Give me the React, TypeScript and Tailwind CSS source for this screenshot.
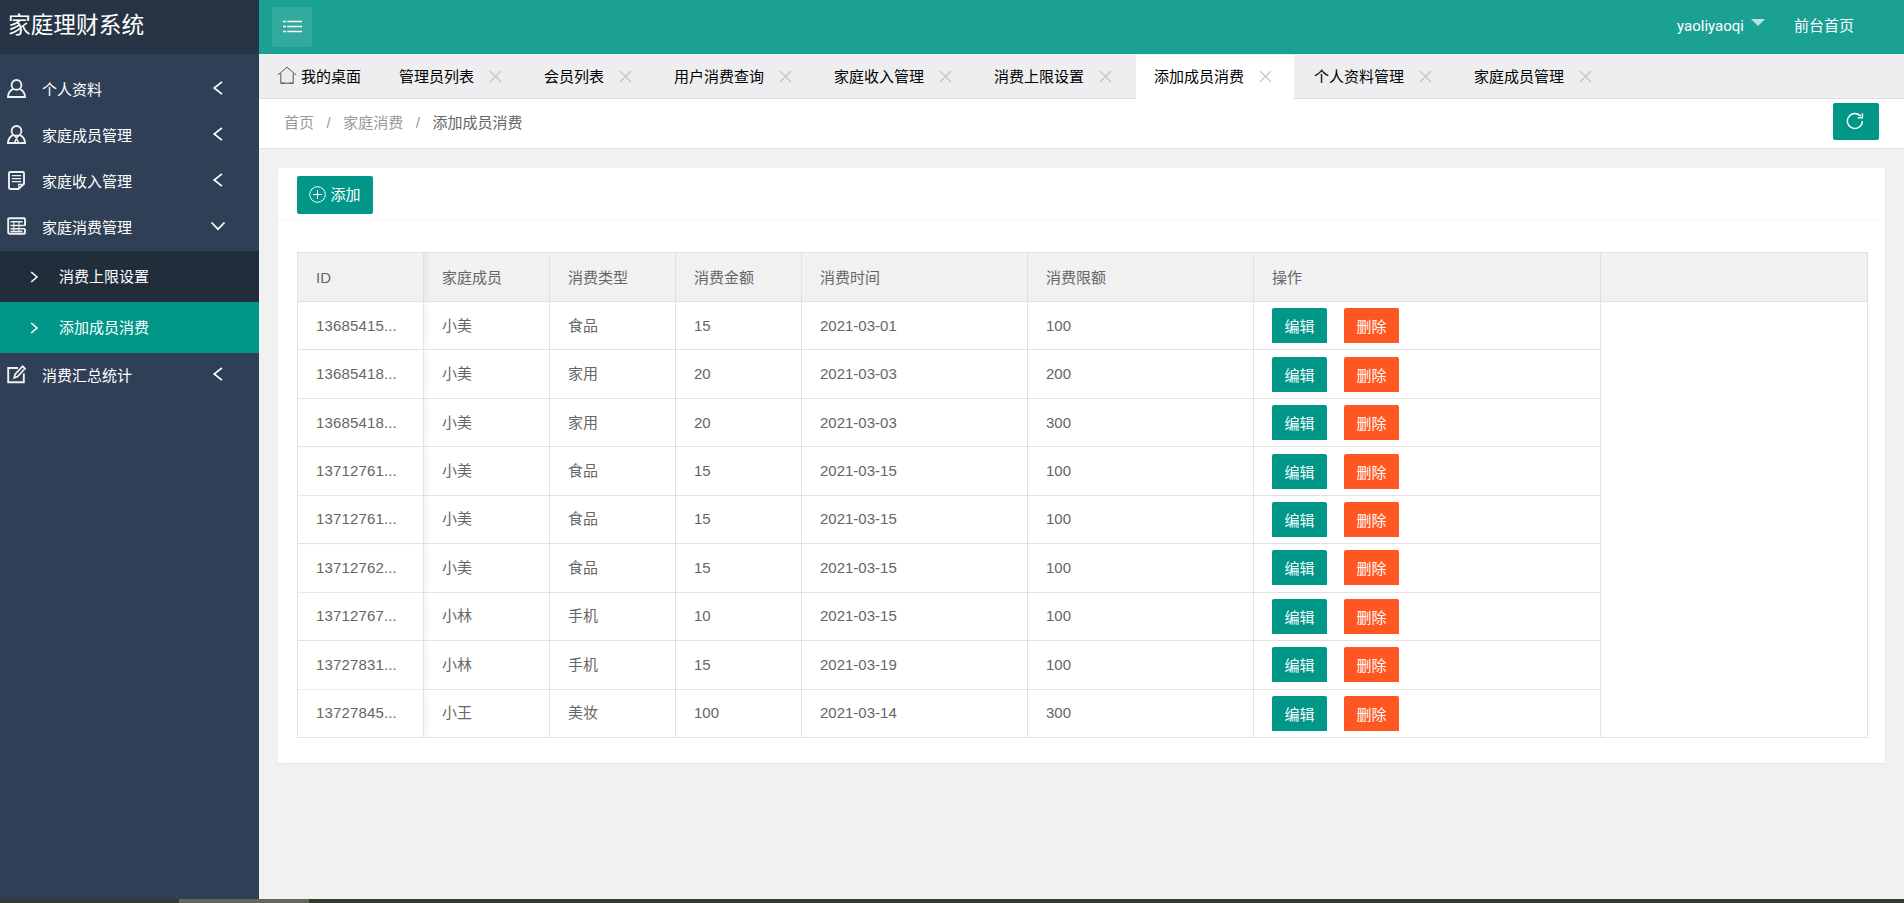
import type { ReactNode } from "react";

const menu = [
  { label: "个人资料", icon: "user" },
  { label: "家庭成员管理", icon: "member" },
  { label: "家庭收入管理", icon: "note" },
  { label: "家庭消费管理", icon: "grid", open: true, children: ["消费上限设置", "添加成员消费"] },
  { label: "消费汇总统计", icon: "edit" },
];

const tabs = [
  "管理员列表",
  "会员列表",
  "用户消费查询",
  "家庭收入管理",
  "消费上限设置",
  "添加成员消费",
  "个人资料管理",
  "家庭成员管理",
];

const current = "添加成员消费";

const rows = [
  ["13685415...", "小美", "食品", "15", "2021-03-01", "100"],
  ["13685418...", "小美", "家用", "20", "2021-03-03", "200"],
  ["13685418...", "小美", "家用", "20", "2021-03-03", "300"],
  ["13712761...", "小美", "食品", "15", "2021-03-15", "100"],
  ["13712761...", "小美", "食品", "15", "2021-03-15", "100"],
  ["13712762...", "小美", "食品", "15", "2021-03-15", "100"],
  ["13712767...", "小林", "手机", "10", "2021-03-15", "100"],
  ["13727831...", "小林", "手机", "15", "2021-03-19", "100"],
  ["13727845...", "小王", "美妆", "100", "2021-03-14", "300"],
];

const headers = ["ID", "家庭成员", "消费类型", "消费金额", "消费时间", "消费限额", "操作", ""];

const cols = "grid grid-cols-[126px_126px_126px_126px_226px_226px_347px_1fr]";

// fixed first column casts a shadow to the right only
const fixedCol = "tracking-[0.15px] shadow-[1px_0_8px_rgba(0,0,0,0.08)] [clip-path:inset(0_-10px_0_0)]";

const iconShapes: Record<string, ReactNode> = {
  user: (
    <>
      <circle cx="9.5" cy="5.9" r="4.9" />
      <path d="M6.3 9.8C3.4 11 1.2 14 1 18h17c-.2-4-2.4-7-5.3-8.2" />
    </>
  ),
  member: (
    <>
      <circle cx="9.5" cy="5.9" r="4.9" />
      <path d="M6.3 9.8C3.4 11 1.2 14 1 18h17c-.2-4-2.4-7-5.3-8.2" />
      <path d="M6.6 10l2.9 3 2.9-3M9.5 12.5L7.8 17.5M9.5 12.5l1.7 5" strokeWidth="1.5" />
    </>
  ),
  note: (
    <>
      <path d="M11.5 18H3.2c-.8 0-1.2-.4-1.2-1.2V2.2C2 1.4 2.4 1 3.2 1h12.6c.8 0 1.2.4 1.2 1.2v10.6L11.5 18z" />
      <path d="M11.8 17.5v-4.2h4.8M4.8 4.6h9.4M4.8 7.6h9.4M4.8 10.6h9.4" strokeWidth="1.3" />
    </>
  ),
  grid: (
    <>
      <path d="M18 8.5V2.2c0-.6-.4-1-1-1H2.2c-.6 0-1 .4-1 1v13.4c0 .7.6 1.2 1.2 1.2H17c.6 0 1-.4 1-1v-4" />
      <path d="M3.5 4.7h12M3.5 8.5H18M3.5 11.8H18M3.5 14.6h12" strokeWidth="1.5" />
      <path d="M6.8 4.5v10M12 4.5v10" strokeWidth="1" />
    </>
  ),
  edit: (
    <>
      <path d="M11 3H1.2v14.2h15.6V8.5" />
      <path d="M7.2 12.8l1-3.6L15.6 1.3 18 3.5l-7.4 8-3.4 1.3z" strokeWidth="1.7" />
    </>
  ),
};

function MenuIcon({ name }: { name: string }) {
  return (
    <svg
      className="mb-px h-[19px] w-[19px] shrink-0 text-[#eef1f4]"
      viewBox="0 0 19 19"
      fill="none"
      stroke="currentColor"
      strokeWidth="1.9"
    >
      {iconShapes[name]}
    </svg>
  );
}

function Chevron({ open }: { open?: boolean }) {
  return (
    <svg className="mb-[3px] h-4 w-4" viewBox="0 0 16 16" fill="none" stroke="currentColor" strokeWidth="1.7">
      <path d={open ? "M1.5 4.5L8 11.2l6.5-6.7" : "M12 1.8L4.2 8l7.8 6.2"} />
    </svg>
  );
}

function Sidebar() {
  return (
    <aside className="flex w-[259px] shrink-0 flex-col bg-[#2f4056] text-white">
      <h1 className="h-[54px] bg-[#263445] pl-[8px] text-[22.7px] leading-[51px]">家庭理财系统</h1>
      <nav className="pt-3">
        {menu.map((item) => (
          <div key={item.label}>
            <div className="flex h-[46px] items-center pr-[33px] pl-[7px]">
              <MenuIcon name={item.icon} />
              <span className="ml-[16px] flex-1 pt-[2px]">{item.label}</span>
              <Chevron open={item.open} />
            </div>
            {item.children && (
              <div className="mt-px -mb-px">
                {item.children.map((child) => (
                  <div
                    key={child}
                    className={`flex h-[51px] items-center pl-[30px] ${child === current ? "bg-[#009688]" : "bg-[#222d3c]"}`}
                  >
                    <svg className="h-3 w-[9px]" viewBox="0 0 9 12" fill="none" stroke="currentColor" strokeWidth="1.6">
                      <path d="M1.2 1L7 6l-5.8 5" />
                    </svg>
                    <span className="ml-[20px]">{child}</span>
                  </div>
                ))}
              </div>
            )}
          </div>
        ))}
      </nav>
    </aside>
  );
}

function TopBar() {
  return (
    <header className="flex h-[54px] items-center bg-[#1ba194] pl-[13px] text-white">
      <button className="flex h-10 w-10 items-center justify-center rounded-[3px] bg-[#32aa9e] pb-px">
        <svg className="h-[13px] w-[19px]" viewBox="0 0 19 13" fill="none" stroke="currentColor" strokeWidth="1.4">
          <path d="M0 1.5h3M4.2 1.5H19M0 6.5h3M4.2 6.5H19M0 11.5h3M4.2 11.5H19" />
        </svg>
      </button>
      <div className="ml-auto flex items-center pr-[50px] pb-[2px]">
        <span className="font-[Roboto,sans-serif]">yaoliyaoqi</span>
        <svg className="mb-[7px] ml-[7px] h-[7px] w-[14px] text-white/70" viewBox="0 0 14 7" fill="currentColor">
          <path d="M0 0h14L7 7z" />
        </svg>
        <span className="ml-[29px]">前台首页</span>
      </div>
    </header>
  );
}

function TabBar() {
  return (
    <div className="flex h-[45px] border-b border-[#dddddd] bg-[#eeeef0] pt-px text-black">
      <div className="flex w-[122px] items-center pl-[18px]">
        <svg className="mb-[3px] h-[18px] w-5" viewBox="0 0 20 18" fill="none" stroke="#555" strokeWidth="1">
          <path d="M.8 9L10 1.2 19.2 9M3.8 7.5v9.7h4M16.2 7.5v9.7h-4M3.8 17.2h12.4" />
        </svg>
        <span className="ml-[4px]">我的桌面</span>
      </div>
      {tabs.map((tab) => (
        <div
          key={tab}
          className={`mr-[2px] flex items-center pr-[21px] pl-[18px] ${tab === current ? "-mb-px bg-white pb-px" : ""}`}
        >
          <span>{tab}</span>
          <svg className="mr-px mb-px ml-[15px] h-[13px] w-[13px]" viewBox="0 0 13 13" stroke="#c4c4c4" strokeWidth="1.2">
            <path d="M1 1l11 11M12 1L1 12" />
          </svg>
        </div>
      ))}
    </div>
  );
}

function Breadcrumb() {
  return (
    <div className="flex h-[50px] items-start justify-between border-b border-[#e2e2e2] bg-white pt-1 pr-[25px] pl-[25px]">
      <div className="flex h-[39px] items-center text-[#999]">
        <span>首页</span>
        <span className="mx-[12.5px]">/</span>
        <span>家庭消费</span>
        <span className="mx-[12.5px]">/</span>
        <span className="text-[#666]">添加成员消费</span>
      </div>
      <button className="flex h-[37px] w-[46px] items-center justify-center rounded-[2px] bg-[#009688] pr-[3px] pb-px text-white">
        <svg className="h-[18px] w-[18px]" viewBox="0 0 18 18" fill="none" stroke="currentColor" strokeWidth="1.4">
          <path d="M16.4 9A7.5 7.5 0 1 1 14.8 4.4M16.4 1.2v4.6h-4.8" />
        </svg>
      </button>
    </div>
  );
}

function ExpenseTable() {
  return (
    <div className="border-t border-l border-[#e2e2e2] text-[#666]">
      <div className={`${cols} h-[49px] border-b border-[#e2e2e2] bg-[#f1f1f1]`}>
        {headers.map((h, i) => (
          <div
            key={i}
            className={`flex items-center border-r border-[#e2e2e2] pt-px pl-[18px] ${i === 0 ? fixedCol : ""}`}
          >
            {h}
          </div>
        ))}
      </div>
      {rows.map((row, r) => (
        <div key={r} className={`${cols} h-[48.45px]`}>
          {row.map((cell, i) => (
            <div
              key={i}
              className={`flex items-center border-r border-b border-[#e2e2e2] pl-[18px] ${i === 0 ? fixedCol : ""}`}
            >
              {cell}
            </div>
          ))}
          <div className="flex items-center gap-[17px] border-r border-b border-[#e2e2e2] pl-[18px] text-white">
            <button className="h-[35px] w-[55px] rounded-t-[2px] bg-[#009688] pt-[3px]">编辑</button>
            <button className="h-[35px] w-[55px] rounded-t-[2px] bg-[#ff5722] pt-[3px]">删除</button>
          </div>
          <div className={`border-r border-[#e2e2e2] ${r === rows.length - 1 ? "border-b" : ""}`} />
        </div>
      ))}
    </div>
  );
}

export default function App() {
  return (
    <div className="flex h-[903px] w-[1904px] flex-col overflow-hidden font-['Liberation_Sans','Noto_Sans_CJK_SC',sans-serif] text-[15px] leading-[22px]">
      <div className="flex min-h-0 flex-1">
        <Sidebar />
        <main className="flex min-w-0 flex-1 flex-col bg-[#f1f1f1]">
          <TopBar />
          <TabBar />
          <Breadcrumb />
          <section className="mx-[19px] mt-[19px] h-[595px] rounded-[2px] bg-white shadow-[0_1px_2px_rgba(0,0,0,0.06)]">
            <div className="h-[53px] border-b border-[#f6f6f6] pt-2 pl-[19px]">
              <button className="flex h-[38px] w-[76px] items-center justify-center gap-1 rounded-[2px] bg-[#009688] text-white">
                <svg className="mb-px h-[17px] w-[17px]" viewBox="0 0 17 17" fill="none" stroke="currentColor" strokeWidth="1">
                  <circle cx="8.5" cy="8.5" r="7.8" />
                  <path d="M8.5 4v9M4 8.5h9" />
                </svg>
                添加
              </button>
            </div>
            <div className="pt-[31px] pr-[17px] pl-[19px]">
              <ExpenseTable />
            </div>
          </section>
        </main>
      </div>
      {/* horizontal scrollbar */}
      <div className="h-1 shrink-0 bg-[#343a2f] pl-[179px]">
        <div className="h-full w-[130px] bg-[#63685b]" />
      </div>
    </div>
  );
}
